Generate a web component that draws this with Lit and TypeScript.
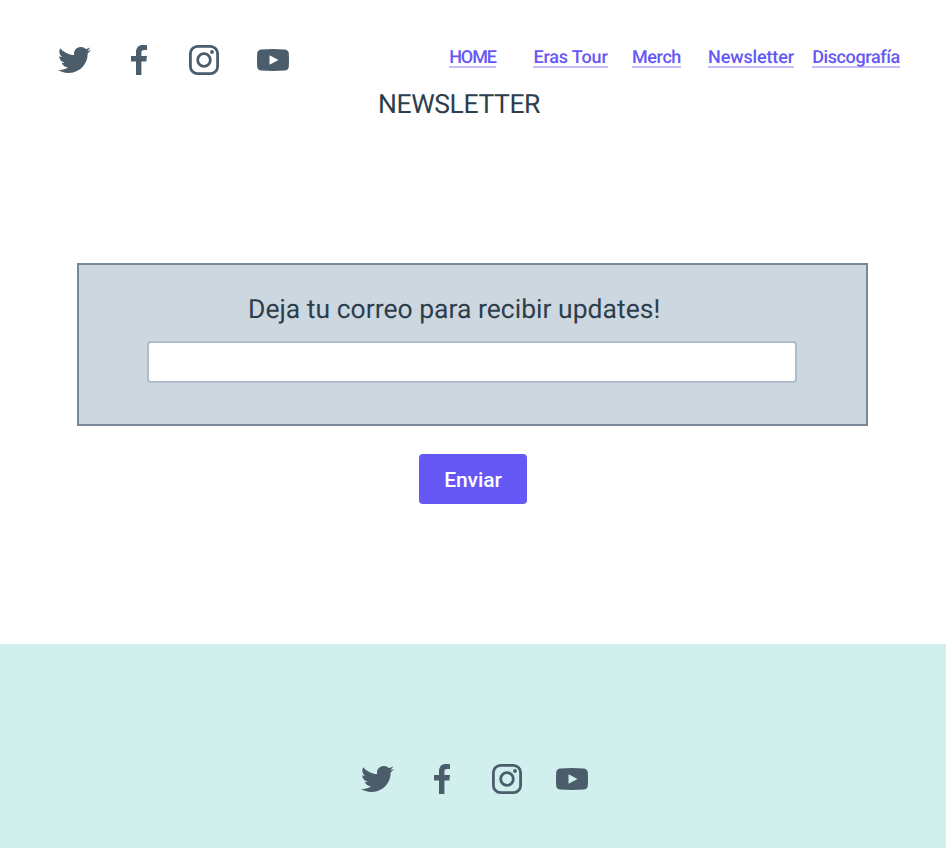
import { LitElement, html, css, svg } from "lit";
import { customElement, property } from "lit/decorators.js";

const glyphs = {
  twitter: {
    box: "0 2.25 24 19.5", w: 33, h: 26,
    art: svg`<path d="M23.954 4.569c-.885.389-1.83.654-2.825.775 1.014-.611 1.794-1.574 2.163-2.723-.951.555-2.005.959-3.127 1.184-.896-.959-2.173-1.559-3.591-1.559-2.717 0-4.92 2.203-4.92 4.917 0 .39.045.765.127 1.124C7.691 8.094 4.066 6.13 1.64 3.161c-.427.722-.666 1.561-.666 2.475 0 1.71.87 3.213 2.188 4.096-.807-.026-1.566-.248-2.228-.616v.061c0 2.385 1.693 4.374 3.946 4.827-.413.111-.849.171-1.296.171-.314 0-.615-.03-.916-.086.631 1.953 2.445 3.377 4.604 3.417-1.68 1.319-3.809 2.105-6.102 2.105-.39 0-.779-.023-1.17-.067 2.189 1.394 4.768 2.209 7.557 2.209 9.054 0 13.999-7.496 13.999-13.986 0-.209 0-.42-.015-.63.961-.689 1.8-1.56 2.46-2.548z"/>`,
  },
  facebook: {
    box: "0 0 16 30", w: 16, h: 30,
    art: svg`<path d="M5 30V16.6H0V11h5V7.2C5 2.6 7.7 0 12 0c1.9 0 3.4.1 4 .2v4.9h-2.8c-2.2 0-2.8 1.1-2.8 2.7V11H16l-.7 5.6h-4.9V30z"/>`,
  },
  instagram: {
    box: "0 0 30 30", w: 30, h: 30,
    art: svg`<rect x="1.4" y="1.4" width="27.2" height="27.2" rx="7.2" fill="none" stroke="currentColor" stroke-width="2.8"/><circle cx="15" cy="15" r="6.3" fill="none" stroke="currentColor" stroke-width="2.8"/><circle cx="23" cy="7" r="1.9"/>`,
  },
  youtube: {
    box: "0 0 32 23", w: 32, h: 22,
    art: svg`<path fill-rule="evenodd" d="M4.5.4Q16-.4 27.5.4 31.5.7 31.8 4.5q.4 7 0 14-.3 3.8-4.3 4.1-11.5.8-23 0-4-.3-4.3-4.1-.4-7 0-14Q.5.7 4.5.4zM12.500 6.500v10l9-5z"/>`,
  },
};
type Glyph = keyof typeof glyphs;

@customElement("social-links")
class SocialLinks extends LitElement {
  static styles = css`
    :host { display: flex; align-items: center; color: #4b5c6b; height: 30px; }
    svg { display: block; fill: currentColor; flex: none; }
    .facebook { margin-left: 40px; }
    .instagram { margin-left: 42px; }
    .youtube { margin-left: var(--last-gap, 38px); }
  `;
  render() {
    return (Object.keys(glyphs) as Glyph[]).map((name) => {
      const g = glyphs[name];
      return html`<svg class=${name} viewBox=${g.box} width=${g.w} height=${g.h} preserveAspectRatio="none">${g.art}</svg>`;
    });
  }
}

@customElement("nav-link")
class NavLink extends LitElement {
  @property() label = "";
  static styles = css`
    a { display: block; box-sizing: border-box; height: 22px; border-bottom: 2px solid #c5befb;
      font: 500 18px/24px Roboto, sans-serif; color: #6558f5; text-decoration: none; white-space: nowrap;
      letter-spacing: var(--track, 0); text-align: center; }
  `;
  render() { return html`<a href="#">${this.label}</a>`; }
}

@customElement("app-root")
class AppRoot extends LitElement {
  static styles = css`
    :host { display: flex; flex-direction: column; height: 848px; background: #fff; color: #2c3e4c;
      font-family: Roboto, "Liberation Sans", sans-serif; overflow: hidden; text-rendering: geometricPrecision; }
    header { display: flex; justify-content: space-between; align-items: flex-start; padding: 45px 46px 0 58px; }
    nav { display: flex; padding-top: 1px; }
    .home { width: 47px; margin-right: 37px; --track: -1.1px; }
    .tour { width: 75px; margin-right: 24px; --track: -0.15px; }
    .merch { width: 49px; margin-right: 27px; --track: -0.4px; }
    .news { width: 86px; margin-right: 18px; --track: -0.15px; }
    .disco { width: 88px; --track: -0.38px; }
    h1 { margin: 13px 0 0 378px; font-size: 26.5px; line-height: 34px; font-weight: 400; letter-spacing: -0.4px; white-space: nowrap; }
    .panel { box-sizing: border-box; width: 791px; height: 163px; margin: 141px 0 0 77px; padding: 27px 69px 0 68px;
      background: #cdd7e0; border: 2px solid #788896; }
    label { display: block; margin-left: 101px; font-size: 26.5px; line-height: 36px; letter-spacing: 0.01px; white-space: nowrap; }
    input { display: block; box-sizing: border-box; width: 650px; height: 42px; margin: 13px 0 0; border: 2px solid #b0bdca;
      border-radius: 4px; background: #fff; outline: none; }
    button { width: 108px; height: 50px; margin: 28px 0 0 419px; padding: 2px 0 0; border: 0; border-radius: 4px;
      background: #6558f5; color: #fff; font: 500 21px/48px Roboto, sans-serif; letter-spacing: -0.1px; }
    footer { margin-top: auto; height: 204px; box-sizing: border-box; padding: 120px 0 0 361px; background: #d1efed; --last-gap: 34px; }
  `;
  render() {
    return html`
      <header>
        <social-links></social-links>
        <nav>
          <nav-link class="home" label="HOME"></nav-link>
          <nav-link class="tour" label="Eras Tour"></nav-link>
          <nav-link class="merch" label="Merch"></nav-link>
          <nav-link class="news" label="Newsletter"></nav-link>
          <nav-link class="disco" label="Discografía"></nav-link>
        </nav>
      </header>
      <h1>NEWSLETTER</h1>
      <section class="panel">
        <label for="mail">Deja tu correo para recibir updates!</label>
        <input id="mail" type="email" />
      </section>
      <button>Enviar</button>
      <footer><social-links></social-links></footer>
    `;
  }
}
